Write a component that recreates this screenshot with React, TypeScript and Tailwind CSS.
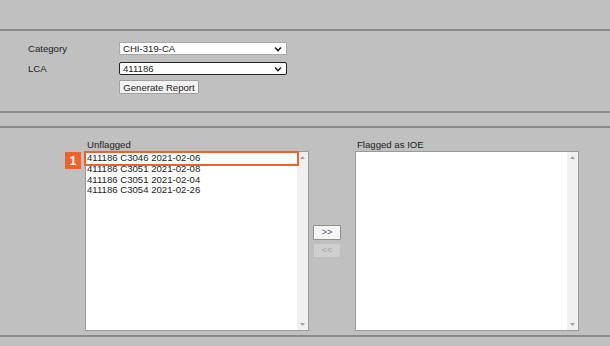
import React from "react";

const font = { fontFamily: '"Liberation Sans", Arial, sans-serif' };

// ── Small pieces ─────────────────────────────────────────────────────

function Chevron() {
  return (
    <svg width="8" height="6" viewBox="0 0 8 6" className="absolute right-[4px] top-1/2 -translate-y-1/2">
      <path d="M1 1.5 L4 4.5 L7 1.5" fill="none" stroke="#222" strokeWidth="1.6" />
    </svg>
  );
}

function FakeSelect({ value, focused }: { value: string; focused?: boolean }) {
  return (
    <div
      className={
        "relative h-[13px] w-[168px] bg-white pl-[3px] text-[9.6px] leading-[11px] text-[#222] " +
        (focused ? "rounded-[2px] border border-[#222]" : "rounded-[1px] border border-[#a8a8a8]")
      }
    >
      {value}
      <Chevron />
    </div>
  );
}

function ScrollTrack() {
  return (
    <div className="flex w-[11px] flex-col items-center justify-between bg-[#f0f0f0] py-[4px]">
      <svg width="5" height="3" viewBox="0 0 5 3">
        <path d="M0 3 L2.5 0 L5 3 Z" fill="#a3a3a3" />
      </svg>
      <svg width="5" height="3" viewBox="0 0 5 3">
        <path d="M0 0 L2.5 3 L5 0 Z" fill="#a3a3a3" />
      </svg>
    </div>
  );
}

function ListBox({ items }: { items: string[] }) {
  return (
    <div className="flex h-[180px] w-[224px] border border-[#9a9a9a] bg-white">
      <div className="flex-1 pl-[1px] pt-[1px] text-[9.6px] leading-[10.8px] text-[#222]">
        {items.map((it) => (
          <div key={it}>{it}</div>
        ))}
      </div>
      <ScrollTrack />
    </div>
  );
}

// ── Component ────────────────────────────────────────────────────────

export default function App() {
  const unflagged = [
    "411186 C3046 2021-02-06",
    "411186 C3051 2021-02-08",
    "411186 C3051 2021-02-04",
    "411186 C3054 2021-02-26",
  ];

  return (
    <div className="relative h-[346px] w-[610px] overflow-hidden bg-[#c0c0c0] text-[#222]" style={font}>
      {/* top band */}
      <div className="h-[29px]" />
      <div className="h-[2px] bg-[#8a8a8a]" />

      {/* ════════════ Report form ════════════ */}
      <div className="flex h-[80px] flex-col pl-[28px] pt-[11px]">
        <div className="flex items-center">
          <div className="w-[91px] text-[9.6px] leading-[11px]">Category</div>
          <FakeSelect value="CHI-319-CA" />
        </div>
        <div className="mt-[7px] flex items-center">
          <div className="w-[91px] text-[9.6px] leading-[11px]">LCA</div>
          <FakeSelect value="411186" focused />
        </div>
        <div className="mt-[5px] flex pl-[91px]">
          <div className="flex h-[14px] w-[80px] items-center justify-center rounded-[1px] border border-[#a0a0a0] bg-[#f2f2f2] text-[9.6px] leading-[11px] text-[#222]">
            Generate Report
          </div>
        </div>
      </div>
      <div className="h-[2px] bg-[#8a8a8a]" />
      <div className="h-[13px]" />
      <div className="h-[2px] bg-[#8a8a8a]" />

      {/* ════════════ Flag lists ════════════ */}
      <div className="relative flex h-[207px] pl-[85px] pt-[11px]">
        <div className="flex flex-col">
          <div className="h-[12px] pl-[2px] text-[9.6px] leading-[11px]">Unflagged</div>
          <ListBox items={unflagged} />
        </div>

        <div className="ml-[4px] mr-[14px] flex flex-col gap-[3px] pt-[86px]">
          <div className="flex h-[15px] w-[28px] items-center justify-center rounded-[1px] border border-[#8f8f8f] bg-[#f6f6f6] text-[9px] text-[#4a4a6a]">
            &gt;&gt;
          </div>
          <div className="flex h-[15px] w-[28px] items-center justify-center rounded-[1px] border border-[#bdbdbd] bg-[#cfcfcf] text-[9px] text-[#a8a8a8]">
            &lt;&lt;
          </div>
        </div>

        <div className="flex flex-col">
          <div className="h-[12px] pl-[2px] text-[9.6px] leading-[11px]">Flagged as IOE</div>
          <ListBox items={[]} />
        </div>

        {/* highlight callout */}
        <div className="pointer-events-none absolute left-[84px] top-[23px] h-[15px] w-[215px] border-2 border-[#f0622a]" />
        <div className="absolute left-[65px] top-[24px] flex h-[17px] w-[16px] items-center justify-center bg-[#f0622a] text-[12px] font-bold text-white">
          1
        </div>
      </div>
      <div className="h-[2px] bg-[#8a8a8a]" />
    </div>
  );
}
